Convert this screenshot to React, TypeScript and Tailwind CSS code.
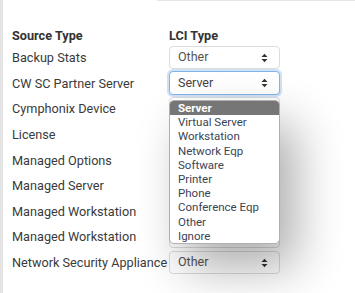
import React from "react";

const rows = [
  "Backup Stats",
  "CW SC Partner Server",
  "Cymphonix Device",
  "License",
  "Managed Options",
  "Managed Server",
  "Managed Workstation",
  "Managed Workstation",
  "Network Security Appliance",
];
const values = ["Other", "Server", "", "", "", "", "", "", "Other"];
const options = [
  "Server",
  "Virtual Server",
  "Workstation",
  "Network Eqp",
  "Software",
  "Printer",
  "Phone",
  "Conference Eqp",
  "Other",
  "Ignore",
];

function Arrows() {
  return (
    <svg width="7" height="10" viewBox="0 0 7 10" className="shrink-0">
      <path d="M0.5 4 L3.5 0.8 L6.5 4 Z" fill="#333" />
      <path d="M0.5 6 L3.5 9.2 L6.5 6 Z" fill="#333" />
    </svg>
  );
}

function Select({ value, focused }: { value: string; focused?: boolean }) {
  return (
    <div
      className={
        focused
          ? "w-[111px] h-[24px] rounded-[4px] border border-[#80b4e8] shadow-[0_0_0_2px_rgba(120,170,230,0.35)] bg-white flex items-center justify-between pl-[8px] pr-[11px] text-[12.5px] text-[#444]"
          : "w-[111px] h-[23px] rounded-[4px] border border-[#dcdcdc] bg-white flex items-center justify-between pl-[8px] pr-[11px] text-[12.5px] text-[#555]"
      }
    >
      <span>{value}</span>
      <Arrows />
    </div>
  );
}

export default function App() {
  return (
    <div
      className="w-[355px] h-[293px] bg-white relative overflow-hidden border-l-[3px] border-[#e4e4e4]"
      style={{ fontFamily: "Roboto, 'Liberation Sans', Arial, sans-serif" }}
    >
      <div className="ml-[154px] h-px bg-[#e6e6e6]" />
      <div className="pl-[9px] pt-[26px] text-[#3a3a3a]">
        <div className="flex h-[17px] items-center font-bold text-[12.7px] text-[#333]">
          <div className="w-[157px]">Source Type</div>
          <div>LCI Type</div>
        </div>
        <div className="mt-[1px]">
          {rows.map((r, i) => (
            <div key={i} className="flex items-center h-[25.6px] text-[12.7px]">
              <div className="w-[157px] whitespace-nowrap">{r}</div>
              <Select value={values[i]} focused={i === 1} />
            </div>
          ))}
        </div>
      </div>
      <div className="absolute left-[166px] top-[100px] w-[111px] rounded-[5px] border border-[#b0b0b0] bg-white shadow-[16px_24px_48px_rgba(0,0,0,0.32)] overflow-hidden text-[11.5px]">
        {options.map((o, i) => (
          <div
            key={o}
            className={
              i === 0
                ? "h-[14.2px] leading-[14.2px] pl-[8px] bg-[#767676] text-white font-bold"
                : "h-[14.2px] leading-[14.2px] pl-[8px] text-[#3b4455]"
            }
          >
            {o}
          </div>
        ))}
      </div>
    </div>
  );
}
